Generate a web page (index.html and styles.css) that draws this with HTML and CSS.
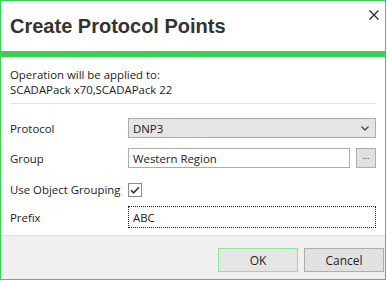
FILE: index.html
```html
<!DOCTYPE html>
<html>
<head>
<meta charset="utf-8">
<link rel="stylesheet" href="styles.css">
</head>
<body>
<div class="dialog">
  <div class="header">
    <h1 class="title">Create Protocol Points</h1>
    <span class="close" aria-label="Close">
      <svg width="10" height="10" viewBox="0 0 10 10"><path d="M0.5 0.5 L9.5 9.5 M9.5 0.5 L0.5 9.5" stroke="#222" stroke-width="1.2" fill="none"/></svg>
    </span>
  </div>
  <div class="accent"></div>
  <div class="content">
    <div class="info">
      <div>Operation will be applied to:</div>
      <div>SCADAPack x70,SCADAPack 22</div>
    </div>
    <div class="sep"></div>
    <div class="form">
      <div class="row row-protocol">
        <div class="label">Protocol</div>
        <div class="select"><span>DNP3</span>
          <svg width="8" height="5" viewBox="0 0 8 5"><path d="M0.5 0.5 L4 4 L7.5 0.5" stroke="#444" stroke-width="1.3" fill="none"/></svg>
        </div>
      </div>
      <div class="row row-group">
        <div class="label">Group</div>
        <div class="group-row">
          <div class="input">Western Region</div>
          <div class="browse">...</div>
        </div>
      </div>
      <div class="row row-check">
        <div class="label">Use Object Grouping</div>
        <div class="check-row">
          <span class="checkbox">
            <svg width="12" height="12" viewBox="0 0 12 12"><path d="M2 6.2 L4.6 8.8 L10 3.2" stroke="#333" stroke-width="1.6" fill="none"/></svg>
          </span>
        </div>
      </div>
      <div class="row row-prefix">
        <div class="label">Prefix</div>
        <div class="input focus">ABC</div>
      </div>
    </div>
  </div>
  <div class="footer">
    <div class="btn btn-ok">OK</div>
    <div class="btn">Cancel</div>
  </div>
</div>
</body>
</html>
```
FILE: styles.css
```css
html, body {
  margin: 0;
  padding: 0;
  background: #ffffff;
}
.dialog {
  width: 386px;
  height: 280px;
  box-sizing: border-box;
  border: 1px solid #3ccd57;
  display: flex;
  flex-direction: column;
  font-family: "Open Sans", "Noto Sans", sans-serif;
  font-size: 11.4px;
  color: #222;
}
.header {
  height: 50px;
  box-sizing: border-box;
  display: flex;
  justify-content: space-between;
  align-items: flex-start;
  padding: 13px 6px 0 9px;
}
.title {
  margin: 0;
  font-family: "Liberation Sans", Arial, sans-serif;
  font-weight: bold;
  font-size: 20px;
  line-height: 24px;
  color: #333;
}
.close {
  margin-top: -4px;
  display: flex;
}
.accent {
  height: 6px;
  background: #3ccd57;
}
.content {
  flex: 1;
  padding: 10px 9px 0 9px;
}
.info {
  line-height: 15px;
}
.sep {
  height: 1px;
  background: #e3e3e3;
  margin-top: 6px;
}
.form {
  display: flex;
  flex-direction: column;
  margin-top: 14px;
}
.row {
  display: grid;
  grid-template-columns: 118px 1fr;
  align-items: center;
}
.row-group {
  margin-top: 10px;
}
.row-check {
  margin-top: 14px;
}
.row-prefix {
  margin-top: 9px;
}
.label {
  line-height: 15px;
}
.select {
  height: 20px;
  box-sizing: border-box;
  border: 1px solid #acacac;
  background: #e5e5e5;
  display: flex;
  align-items: center;
  justify-content: space-between;
  padding: 0 6px 0 4px;
}
.group-row {
  display: flex;
  gap: 6px;
}
.input {
  flex: 1;
  height: 20px;
  box-sizing: border-box;
  border: 1px solid #acacac;
  background: #fff;
  display: flex;
  align-items: center;
  padding: 0 4px;
}
.browse {
  width: 20px;
  height: 20px;
  box-sizing: border-box;
  border: 1px solid #adadad;
  background: #e1e1e1;
  font-size: 9px;
  line-height: 14px;
  text-align: center;
  color: #333;
}
.check-row {
  display: flex;
  height: 14px;
}
.checkbox {
  width: 14px;
  height: 14px;
  box-sizing: border-box;
  border: 1px solid #8a8a8a;
  background: #fff;
  display: flex;
  align-items: center;
  justify-content: center;
}
.input.focus {
  height: 22px;
  border: 1px dotted #222;
}
.footer {
  box-sizing: border-box;
  border-top: 1px solid #dedede;
  background: #f0f0f0;
  height: 44px;
  display: flex;
  justify-content: flex-end;
  align-items: flex-start;
  gap: 6px;
  padding: 12px 1px 0 0;
}
.btn {
  width: 80px;
  height: 24px;
  box-sizing: border-box;
  border: 1px solid #adadad;
  background: #e1e1e1;
  display: flex;
  align-items: center;
  justify-content: center;
  font-size: 12px;
  color: #222;
}
.btn-ok {
  border-color: #86e69a;
  background: #e5e5e5;
}
```
